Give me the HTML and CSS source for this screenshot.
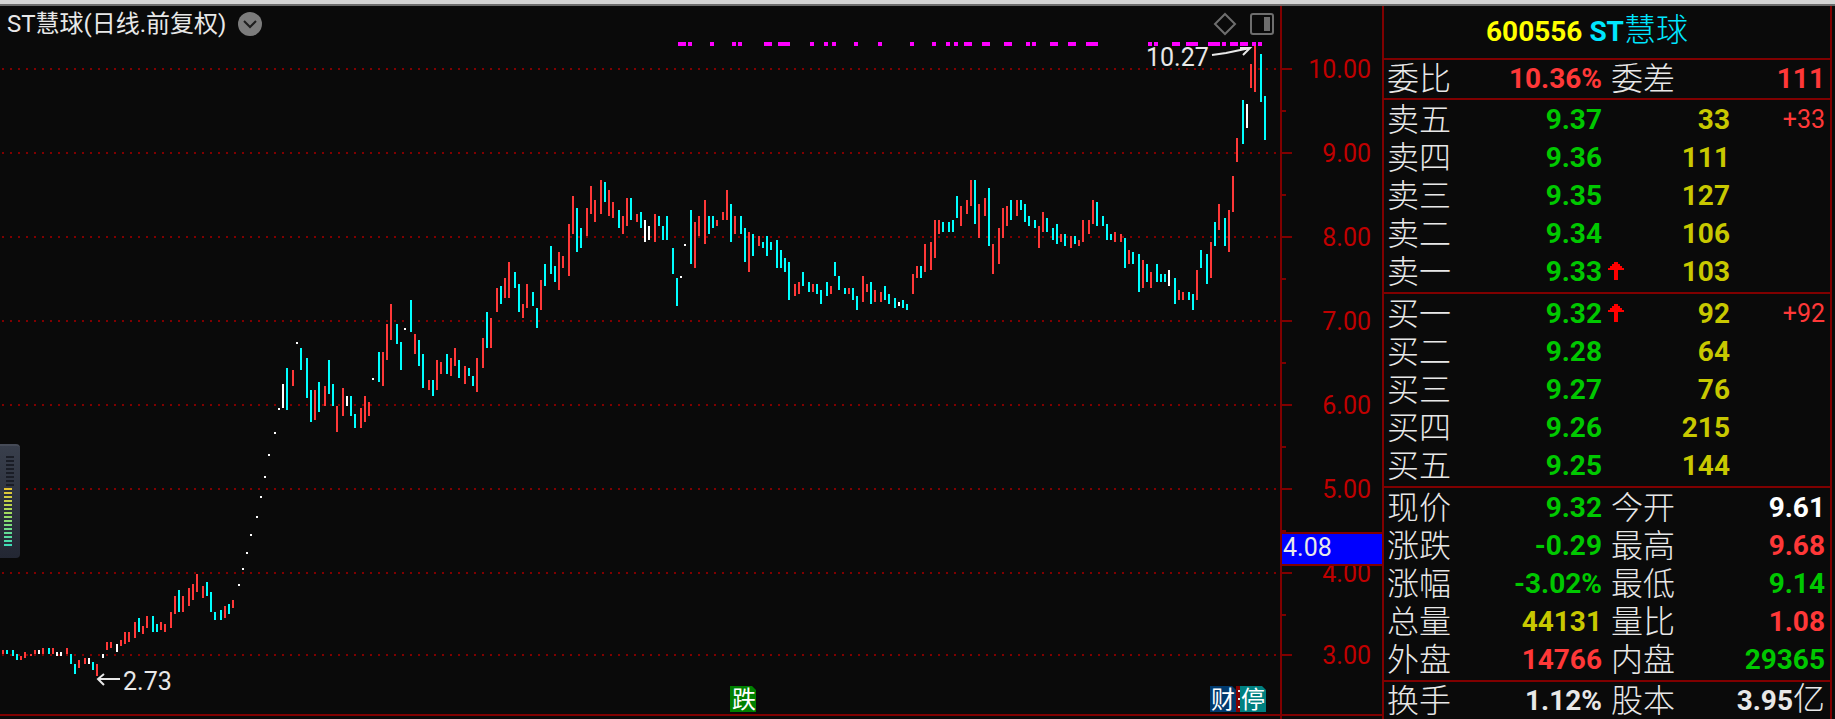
FILE: index.html
```html
<!DOCTYPE html>
<html lang="zh-CN">
<head>
    <meta charset="UTF-8">
    <meta name="viewport" content="width=device-width, initial-scale=1.0">
    <title>ST慧球 600556</title>
    <link rel="stylesheet" href="styles.css">
</head>
<body>

<main class="workspace">
    <section class="chart">
        <header class="chart-header">
            <h1>ST慧球(日线.前复权)</h1>
            <button class="icon-button" aria-label="复权方式">
                <svg width="24" height="24" viewBox="0 0 24 24">
                    <circle cx="12" cy="12" r="12" fill="#7c7c7c"/>
                    <path d="M6 9l6 6 6-6" fill="none" stroke="#1e1e1e" stroke-width="2"/>
                </svg>
            </button>
            <div class="chart-tools">
                <button class="icon-button" aria-label="标记">
                    <svg width="24" height="24" viewBox="0 0 24 24">
                        <path d="M12 2l10 10-10 10L2 12z" fill="none" stroke="#6e6e6e" stroke-width="2"/>
                    </svg>
                </button>
                <button class="icon-button" aria-label="侧栏">
                    <svg width="24" height="24" viewBox="0 0 24 24">
                        <rect x="1" y="2" width="22" height="20" rx="2" fill="none" stroke="#6e6e6e" stroke-width="2"/>
                        <rect x="14" y="5" width="6" height="14" fill="#6e6e6e"/>
                    </svg>
                </button>
            </div>
        </header>

        <svg class="plot" viewBox="0 40 1280 674" preserveAspectRatio="xMaxYMin meet" role="img" aria-label="日线走势">
            <path class="grid" d="M2 69H1280M2 153H1280M2 237H1280M2 321H1280M2 405H1280M2 489H1280M2 573H1280M2 655H1280"/>

            <!-- 停牌 / 公告标记 -->
            <path class="marks" d="M678 44H686M688 44H692M710 44H714M732 44H736M738 44H742M764 44H772M778 44H790M810 44H814M824 44H828M832 44H836M854 44H858M878 44H882M910 44H914M932 44H936M946 44H950M954 44H958M964 44H972M982 44H990M1004 44H1012M1026 44H1030M1032 44H1036M1050 44H1058M1068 44H1076M1086 44H1098M1148 44H1152M1154 44H1158M1172 44H1180M1186 44H1198M1208 44H1220M1222 44H1226M1230 44H1238M1240 44H1248M1252 44H1256M1258 44H1262"/>

            <!-- 上涨 -->
            <path class="bars up" d="M3 650V654M21 656V660M25 652V658M31 654V656M35 650V654M43 648V654M53 648V654M67 648V654M79 660V668M85 658V664M97 664V676M107 642V650M111 642V648M121 640V646M125 632V644M129 632V642M135 622V638M143 626V634M147 616V628M161 622V630M165 624V632M171 612V628M175 596V614M183 596V612M189 588V606M193 584V600M197 574V592
                M203 586V598M225 606V618M233 600V608M293 370V386M315 390V420M325 386V406M337 406V432M343 388V416M361 408V428M365 396V422M369 402V416M383 352V386M387 324V360M391 304V340M415 334V354M429 380V390M437 360V390M441 362V374M451 358V376M455 348V366M465 366V384M477 358V392M483 338V368M491 318V348M497 288V312
                M505 278V298M509 262V298M523 304V318M527 284V308M541 280V310M559 252V290M563 256V268M569 224V276M573 196V234M587 208V236M591 186V214M595 200V222M601 180V214M609 190V216M613 202V218M623 216V234M627 198V226M637 214V222M655 214V242M695 222V268M699 216V236M705 200V244M717 220V226M723 212V220M727 190V220M735 216V234M749 232V272M759 236V246M795 284V296M799 282V294
                M813 284V292M831 286V294M849 288V294M863 276V302M867 284V292M875 290V302M881 292V302M913 274V294M917 266V278M925 244V272M931 242V270M935 220V258M939 220V234M961 206V226M967 200V214M971 180V206M979 204V238M985 198V216M993 244V274M999 228V264
                M1003 208V238M1007 206V226M1017 200V216M1039 226V248M1043 212V232M1061 234V242M1071 236V248M1079 240V246M1083 220V242M1089 220V234M1093 200V224M1115 232V242M1121 234V242M1129 250V264M1143 260V288M1151 272V288M1179 290V300M1183 292V300M1197 270V300M1211 242V278M1219 204V230M1229 210V252M1233 176V212M1237 138V162M1251 64V88M1255 46V92"/>

            <!-- 下跌 -->
            <path class="bars down" d="M7 650V654M13 650V656M17 654V660M49 648V654M71 654V664M75 664V674M93 662V670M139 618V632M153 616V632M157 624V632M179 590V612M207 582V596M211 592V612M215 612V620M221 610V620M229 604V614M287 368V410M301 348V370M307 358V398M311 390V422M319 382V412M329 360V394M333 384V406M351 396V416M355 414V428M379 352V382M397 324V344
                M401 342V370M411 300V332M419 340V366M423 354V388M433 380V396M447 354V374M459 360V378M469 368V376M473 376V386M487 312V348M501 286V304M515 272V288M519 284V312M533 292V306M537 308V328M545 264V286M551 246V274M555 266V282M577 208V252M581 228V248M605 182V202M619 210V228M631 198V220M641 212V228M659 216V226M663 226V240M667 216V240M673 248V274M677 278V306M691 210V264
                M709 216V234M713 216V228M731 204V242M741 216V234M745 228V262M753 234V256M763 242V248M767 236V256M771 242V250M777 240V268M781 250V268M785 258V272M789 262V300M803 272V286M809 282V292M817 284V294M821 290V304M827 282V296M835 262V276M839 276V290M845 288V294M853 288V300M857 296V310M871 282V304M885 286V300M889 294V304M895 298V308
                M903 300V308M907 304V310M921 266V278M943 222V232M949 222V232M953 220V232M957 196V218M975 180V224M989 188V246M1011 200V220M1021 200V210M1025 204V222M1029 216V226M1035 220V228M1047 218V232M1053 228V240M1057 224V244M1065 234V246M1075 236V244M1097 202V226
                M1103 216V226M1107 224V240M1111 234V240M1125 238V268M1133 252V264M1139 254V292M1147 264V282M1157 264V282M1161 274V282M1165 274V282M1175 278V304M1189 292V300M1193 294V310M1201 250V268M1207 254V284M1215 222V246M1225 218V246M1243 100V144M1261 54V102M1265 96V140"/>

            <!-- 平盘和一字板 -->
            <path class="bars flat" d="M39 650V654M57 652V656M61 652V656M89 658V664M103 654V658M117 644V652M239 584V586M243 568V570M247 552V554M251 534V536M257 516V518M261 496V498M265 476V478M269 454V456M275 432V434M279 408V410M283 384V408M297 342V344M347 396V406M373 378V380M405 328V330
                M645 220V242M649 226V240M681 276V278M685 244V246M899 302V306M1169 270V286M1247 104V128"/>

            <path class="pointer" d="M1212 55L1226 53L1250 48M1240 48H1250L1243 55"/>
            <text class="note" x="1146" y="66">10.27</text>
            <path class="pointer" d="M120 679H98M104 674L98 679L104 685"/>
            <text class="note" x="123" y="690">2.73</text>

            <path fill="#008000" d="M730 686h22l4 4v22h-26z"/>
            <text class="tag" x="732" y="708">跌</text>
            <path fill="#003a6e" d="M1210 686h22l4 4v22h-26z"/>
            <text class="tag" x="1211" y="708">财</text>
            <path fill="#800000" d="M1236 686h4v26h-4z"/>
            <path fill="#e8e8e8" d="M1238 690h2v2h-2zM1238 698h2v2h-2zM1238 706h2v2h-2z"/>
            <path fill="#008080" d="M1240 686h22l4 4v22h-26z"/>
            <text class="tag" x="1241" y="708">停</text>
        </svg>

        <!-- 左侧浮动电平条 -->
        <div class="meter">
            <div class="meter-off"></div>
            <div class="meter-on"></div>
        </div>
    </section>

    <aside class="axis">
        <ol class="scale">
            <li>10.00</li>
            <li>9.00</li>
            <li>8.00</li>
            <li>7.00</li>
            <li>6.00</li>
            <li>5.00</li>
            <li>4.00</li>
            <li>3.00</li>
        </ol>
        <div class="cursor-price">4.08</div>
    </aside>

    <section class="quote">
        <h2><span class="code">600556</span> <span class="name">ST<span class="cjk">慧球</span></span></h2>

        <table class="stats">
            <colgroup><col class="c-label"><col class="c-price"><col class="c-middle"><col class="c-last"></colgroup>
            <tr><th>委比</th><td class="red">10.36%</td><th>委差</th><td class="red">111</td></tr>
        </table>

        <table class="book">
            <colgroup><col class="c-label"><col class="c-price"><col class="c-arrow"><col class="c-volume"><col class="c-last"></colgroup>
            <tr><th>卖五</th><td class="green">9.37</td><td></td><td class="yellow">33</td><td class="delta">+33</td></tr>
            <tr><th>卖四</th><td class="green">9.36</td><td></td><td class="yellow">111</td><td></td></tr>
            <tr><th>卖三</th><td class="green">9.35</td><td></td><td class="yellow">127</td><td></td></tr>
            <tr><th>卖二</th><td class="green">9.34</td><td></td><td class="yellow">106</td><td></td></tr>
            <tr><th>卖一</th><td class="green">9.33</td><td class="arrow"><svg width="16" height="18" viewBox="0 0 16 18"><path d="M6 0h4v2h2v2h2v2h2v2h-6v10H6V8H0V6h2V4h2V2h2z"/></svg></td><td class="yellow">103</td><td></td></tr>
        </table>

        <table class="book">
            <colgroup><col class="c-label"><col class="c-price"><col class="c-arrow"><col class="c-volume"><col class="c-last"></colgroup>
            <tr><th>买一</th><td class="green">9.32</td><td class="arrow"><svg width="16" height="18" viewBox="0 0 16 18"><path d="M6 0h4v2h2v2h2v2h2v2h-6v10H6V8H0V6h2V4h2V2h2z"/></svg></td><td class="yellow">92</td><td class="delta">+92</td></tr>
            <tr><th>买二</th><td class="green">9.28</td><td></td><td class="yellow">64</td><td></td></tr>
            <tr><th>买三</th><td class="green">9.27</td><td></td><td class="yellow">76</td><td></td></tr>
            <tr><th>买四</th><td class="green">9.26</td><td></td><td class="yellow">215</td><td></td></tr>
            <tr><th>买五</th><td class="green">9.25</td><td></td><td class="yellow">144</td><td></td></tr>
        </table>

        <table class="stats">
            <colgroup><col class="c-label"><col class="c-price"><col class="c-middle"><col class="c-last"></colgroup>
            <tr><th>现价</th><td class="green">9.32</td><th>今开</th><td class="white">9.61</td></tr>
            <tr><th>涨跌</th><td class="green">-0.29</td><th>最高</th><td class="red">9.68</td></tr>
            <tr><th>涨幅</th><td class="green">-3.02%</td><th>最低</th><td class="green">9.14</td></tr>
            <tr><th>总量</th><td class="yellow">44131</td><th>量比</th><td class="red">1.08</td></tr>
            <tr><th>外盘</th><td class="red">14766</td><th>内盘</th><td class="green">29365</td></tr>
        </table>

        <table class="stats capital">
            <colgroup><col class="c-label"><col class="c-price"><col class="c-middle"><col class="c-last"></colgroup>
            <tr><th>换手</th><td>1.12%</td><th>股本</th><td>3.95<span class="cjk">亿</span></td></tr>
        </table>
    </section>
</main>

</body>
</html>
```
FILE: styles.css
```css
* {
    box-sizing: border-box;
}
body {
    margin: 0;
    height: 100vh;
    overflow: hidden;
    display: flex;
    flex-direction: column;
    background-color: #0a0a0a;
    border-top: 4px solid #d4d4d4;
    color: #e8e8e8;
    font-family: Roboto, "Noto Sans CJK SC", sans-serif;
    font-size: 25px;
}
.workspace {
    flex: 1;
    min-height: 0;
    display: flex;
    border-top: 2px solid #6c6c6c;
    padding-right: 3px;
}

/* K线 */
.chart {
    position: relative;
    flex: 1;
    min-width: 0;
}
.chart-header {
    display: flex;
    align-items: center;
    height: 34px;
    padding: 2px 6px 0 7px;
}
.chart-header h1 {
    margin: 0 12px 0 0;
    font-size: 24px;
    line-height: 32px;
    font-weight: 400;
    white-space: nowrap;
}
.icon-button {
    display: block;
    padding: 0;
    border: none;
    background: none;
    cursor: pointer;
}
.icon-button svg {
    display: block;
}
.chart-tools {
    display: flex;
    gap: 13px;
    margin-left: auto;
}
.plot {
    display: block;
    width: 100%;
    height: 676px;
    border-bottom: 2px solid #800000;
}
.grid {
    stroke: #800000;
    stroke-width: 2;
    stroke-dasharray: 2 6;
}
.marks {
    stroke: #ff00ff;
    stroke-width: 4;
}
.bars {
    stroke-width: 2;
    shape-rendering: crispEdges;
}
.up {
    stroke: #ff3838;
}
.down {
    stroke: #00ffff;
}
.flat {
    stroke: #ffffff;
}
.pointer {
    fill: none;
    stroke: #e8e8e8;
    stroke-width: 2;
}
.note {
    fill: #e8e8e8;
    font-size: 25px;
}
.tag {
    fill: #ffffff;
    font-size: 24px;
}

.meter {
    position: absolute;
    left: 0;
    top: 438px;
    width: 20px;
    height: 114px;
    padding: 10px 0 0 4px;
    border-radius: 0 4px 4px 0;
    border-top: 2px solid #464b57;
    background: linear-gradient(#383e4b, #232733);
}
.meter-off {
    width: 8px;
    height: 32px;
    margin-left: 2px;
    background: repeating-linear-gradient(#1a1d26 0 2px, transparent 2px 4px);
}
.meter-on {
    width: 8px;
    height: 58px;
    background: repeating-linear-gradient(transparent 0 2px, #2a2e3b 2px 4px), linear-gradient(#e8c430, #a0dc60 45%, #3cdcb8);
}

/* 价格坐标 */
.axis {
    position: relative;
    flex: 0 0 102px;
    border-left: 2px solid #800000;
}
.scale {
    height: 710px;
    margin: 0;
    padding: 21px 0 0;
    list-style: none;
    border-bottom: 2px solid #800000;
    color: #c00000;
}
.scale li {
    position: relative;
    height: 84px;
    padding-right: 11px;
    line-height: 86px;
    text-align: right;
}
.scale li:last-child {
    height: 80px;
    line-height: 82px;
}
.scale li::before,
.scale li::after {
    content: "";
    position: absolute;
    left: 0;
    height: 2px;
    background-color: #800000;
}
.scale li::before {
    top: calc(50% - 1px);
    width: 10px;
}
.scale li::after {
    bottom: -1px;
    width: 4px;
}
.scale li:last-child::after {
    display: none;
}
.cursor-price {
    position: absolute;
    left: 0;
    right: 0;
    top: 526px;
    height: 34px;
    padding-left: 1px;
    line-height: 28px;
    background-color: #0000ff;
    border-top: 2px solid #800000;
    border-bottom: 2px solid #800000;
}

/* 报价 */
.quote {
    flex: 0 0 450px;
    overflow: hidden;
    border-left: 2px solid #800000;
    border-right: 2px solid #800000;
    font-size: 28px;
}
.quote h2 {
    height: 52px;
    margin: 0;
    padding-right: 40px;
    line-height: 52px;
    font-size: 28px;
    text-align: center;
}
.code {
    color: #ffff00;
}
.name {
    color: #00e6ff;
}
.cjk {
    font-size: 32px;
    font-weight: 300;
    line-height: 1;
}
.quote table {
    width: 100%;
    table-layout: fixed;
    border-collapse: separate;
    border-spacing: 0;
    padding: 1px 5px 1px 3px;
    border-top: 2px solid #800000;
}
.quote h2 + table {
    padding-top: 0;
    padding-bottom: 0;
}
.c-label {
    width: 100px;
}
.c-price {
    width: 115px;
}
.c-middle {
    width: 128px;
}
.c-arrow {
    width: 28px;
}
.c-volume {
    width: 100px;
}
.quote th,
.quote td {
    height: 38px;
    padding: 0;
    line-height: 38px;
    white-space: nowrap;
}
.quote th {
    font-size: 32px;
    font-weight: 300;
    text-align: left;
}
.quote td {
    font-weight: 700;
    text-align: right;
}
.stats td + th {
    padding-left: 9px;
}
.quote .capital th,
.quote .capital td {
    height: 34px;
    line-height: 34px;
}
.quote .arrow {
    padding: 0 0 2px 6px;
    text-align: left;
}
.arrow svg {
    display: block;
    fill: #ff0000;
}
.quote .delta {
    color: #ff3838;
    font-size: 25px;
    font-weight: 400;
}
.red {
    color: #ff3838;
}
.green {
    color: #00c800;
}
.yellow {
    color: #c8c800;
}
.white {
    color: #ffffff;
}
```
